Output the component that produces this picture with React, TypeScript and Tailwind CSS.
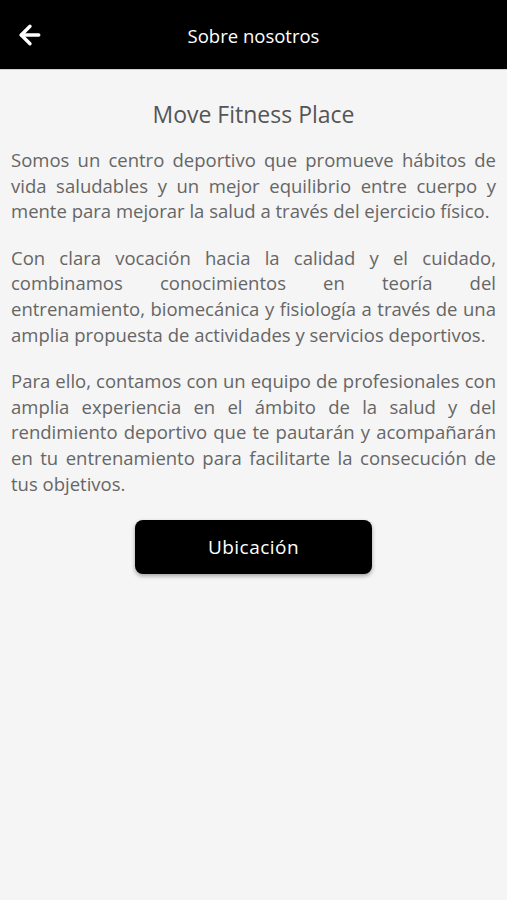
import { ArrowLeft } from 'lucide-react';

const paragraphs = [
  'Somos un centro deportivo que promueve hábitos de vida saludables y un mejor equilibrio entre cuerpo y mente para mejorar la salud a través del ejercicio físico.',
  'Con clara vocación hacia la calidad y el cuidado, combinamos conocimientos en teoría del entrenamiento, biomecánica y fisiología a través de una amplia propuesta de actividades y servicios deportivos.',
  'Para ello, contamos con un equipo de profesionales con amplia experiencia en el ámbito de la salud y del rendimiento deportivo que te pautarán y acompañarán en tu entrenamiento para facilitarte la consecución de tus objetivos.',
];

export default function App() {
  return (
    <div className="min-h-[900px] bg-[#f5f5f5] font-['Open_Sans',sans-serif]">
      <header className="flex h-[70px] items-center border-b border-[#d0d0d0] bg-black px-[15px]">
        <button className="flex h-8 w-8 items-center text-white">
          <ArrowLeft className="h-[30px] w-[30px]" strokeWidth={2.7} />
        </button>
        <div className="flex-1 pr-8 pt-[3px] text-center text-[18.5px] text-white">
          Sobre nosotros
        </div>
      </header>
      <main className="px-[11px] pt-[27px]">
        <h1 className="text-center text-[23px] leading-[34px] text-[#555]">
          Move Fitness Place
        </h1>
        <div className="mt-[16px] flex flex-col gap-[21px]">
          {paragraphs.map((p) => (
            <p
              key={p.slice(0, 10)}
              className="text-justify text-[18.5px] leading-[25.6px] text-[#666]"
            >
              {p}
            </p>
          ))}
        </div>
        <div className="mt-[24px] flex justify-center">
          <button className="h-[54px] w-[237px] rounded-lg bg-black text-[19px] tracking-wide text-white shadow-[0_2px_4px_rgba(0,0,0,0.35)]">
            Ubicación
          </button>
        </div>
      </main>
    </div>
  );
}
